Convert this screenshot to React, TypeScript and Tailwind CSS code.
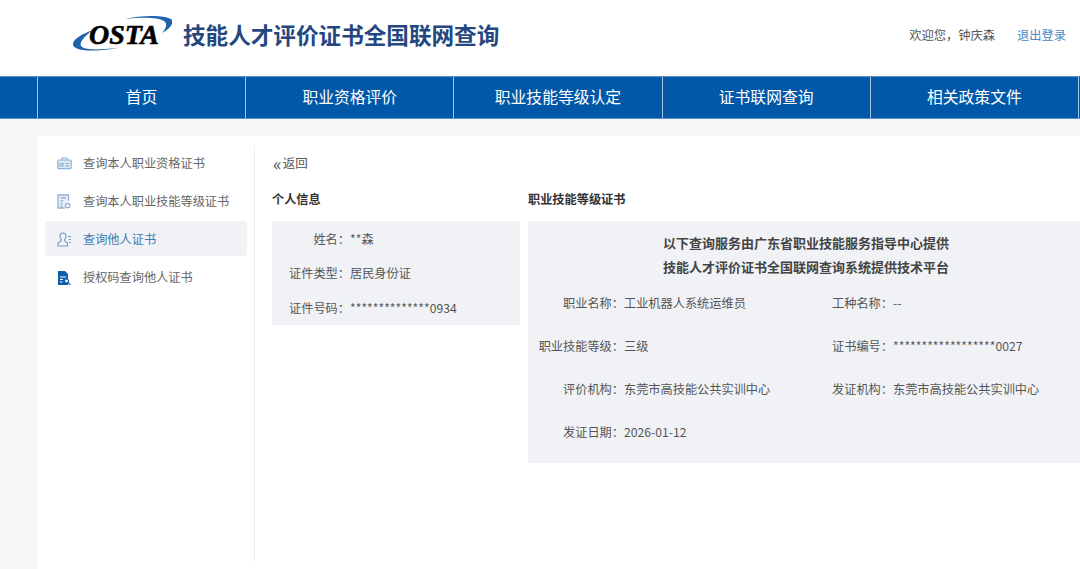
import type { ReactNode } from 'react'

const font = '[font-family:"Noto_Sans_CJK_SC","Liberation_Sans",sans-serif]'

function BriefcaseIcon() {
  return (
    <svg width="15" height="13" viewBox="0 0 15 13" fill="none" stroke="#8fb1d3" strokeWidth="1.2">
      <path d="M5 3V1h5v2" />
      <rect x="0.8" y="3" width="13.4" height="8.6" rx="1" fill="#dfe9f3" />
      <path d="M3 6.5h3v2.500H3zM8.500 6.500h3.500M8.500 8.800h3.500" />
    </svg>
  )
}

function FormIcon() {
  return (
    <svg width="14" height="15" viewBox="0 0 14 15" fill="none" stroke="#8fb1d3" strokeWidth="1.300">
      <path d="M11.500 7V1H1v13h7" fill="#eaf0f7" />
      <path d="M3.500 4h5.500M3.500 6.800h3M3.500 9.500h2M3.500 12h2" />
      <circle cx="10.800" cy="11.500" r="2.200" fill="#fff" />
    </svg>
  )
}

function PersonIcon() {
  return (
    <svg width="15" height="15" viewBox="0 0 15 15" fill="none" stroke="#6f9ccb" strokeWidth="1.100">
      <path d="M6 1c-2 0-3 1.400-3 3.200 0 1.500.6 2.600 1.400 3.300v1.300L1 11v3h9.500v-3L7.600 8.800V7.500c.8-.7 1.400-1.800 1.400-3.300C9 2.400 8 1 6 1z" />
      <path d="M11 4.500h3M12 7.500h2M12 10.500h2" />
    </svg>
  )
}

function DocSearchIcon() {
  return (
    <svg width="14" height="14" viewBox="0 0 14 14">
      <path d="M1 0h7l3 3v11H1z" fill="#0f5ca8" />
      <path d="M3 6h6M3 8.500h3M3 11h2.500" stroke="#fff" strokeWidth="1.100" />
      <circle cx="9.500" cy="10" r="2" fill="#fff" stroke="#0f5ca8" strokeWidth="1.100" />
      <path d="M11 11.500l2.300 2.300" stroke="#0f5ca8" strokeWidth="1.200" />
    </svg>
  )
}

function OstaLogo() {
  return (
    <div className="relative w-[100px] h-[38px] shrink-0">
      <svg className="absolute inset-0" width="100" height="38" viewBox="0 0 100 38" fill="#1f62ad">
        <path d="M21 14C10 18 1 23 1 28c0 6 14 9 45 4-20 2-32 2-36-1-4-3 1-10 11-17z" />
        <path d="M53 3C70-1 95-1 100 4c2 4-3 9-10 13 4-5 6-9 2-12-6-4-22-4-39-2z" />
      </svg>
      <span className="absolute left-[17px] top-[3px] font-['Liberation_Serif',serif] text-[28px] leading-[32px] font-bold italic text-black [-webkit-text-stroke:0.6px_black] whitespace-nowrap">
        OSTA
      </span>
    </div>
  )
}

function Field({ label, value, width }: { label: string; value: ReactNode; width: string }) {
  return (
    <div className="flex text-[12.200px] leading-[18px] text-[#555]">
      <span className={`${width} text-right shrink-0 whitespace-nowrap`}>{label}：</span>
      <span className="whitespace-nowrap">{value}</span>
    </div>
  )
}

const navItems = ['首页', '职业资格评价', '职业技能等级认定', '证书联网查询', '相关政策文件']

const sideItems = [
  { icon: <BriefcaseIcon />, text: '查询本人职业资格证书' },
  { icon: <FormIcon />, text: '查询本人职业技能等级证书' },
  { icon: <PersonIcon />, text: '查询他人证书', active: true },
  { icon: <DocSearchIcon />, text: '授权码查询他人证书' },
]

export default function App() {
  return (
    <div className={`${font} w-[1080px] h-[569px] overflow-hidden bg-[#f6f6f6]`}>
      <header className="h-[76px] bg-white flex items-center pl-[72px] pr-[14px] pb-[6px]">
        <OstaLogo />
        <h1 className="ml-[11px] text-[22.600px] leading-[32px] font-bold text-[#25477f] whitespace-nowrap">
          技能人才评价证书全国联网查询
        </h1>
        <span className="ml-auto text-[12.250px] text-[#555]">欢迎您，钟庆森</span>
        <a className="ml-[22px] text-[12.250px] text-[#4f86bd]">退出登录</a>
      </header>

      <nav className="h-[43px] bg-[#0258a8] border-y border-[#5b92c8] flex pl-[37px]">
        {navItems.map(item => (
          <div
            key={item}
            className="w-[208.200px] pb-[1px] border-l border-[#a9c5e2] flex items-center justify-center text-white text-[15.800px]"
          >
            {item}
          </div>
        ))}
        <div className="border-l border-[#a9c5e2]" />
      </nav>

      <div className="ml-[37px] mt-[17px] h-[433px] bg-white flex pt-[9px]">
        <aside className="w-[218px] h-[416px] border-r border-[#eceef0] pl-[8px] pr-[7px] shrink-0">
          {sideItems.map(item => (
            <div
              key={item.text}
              className={`h-[35px] mb-[3px] pt-[2px] flex items-center rounded-[2px] pl-[11px] text-[12.200px] ${
                item.active ? 'bg-[#f0f2f5] text-[#3f7ab6]' : 'text-[#666]'
              }`}
            >
              <span className="w-[16px] flex justify-center">{item.icon}</span>
              <span className="ml-[11px] whitespace-nowrap">{item.text}</span>
            </div>
          ))}
        </aside>

        <main className="pl-[17px] flex-1 min-w-0">
          <div className="h-[18px] mt-[9px] flex items-center text-[12.500px] text-[#555]">
            <span className="ml-[1px] mr-[1px] text-[18px] leading-[18px]">«</span>返回
          </div>
          <div className="flex mt-[18px] items-start">
            <section className="w-[248px] shrink-0">
              <h2 className="text-[12.200px] leading-[18px] font-bold text-[#333]">个人信息</h2>
              <div className="mt-[13px] h-[104px] bg-[#f0f2f5] pt-[9px] flex flex-col gap-[16.300px]">
                <Field label="姓名" value="**森" width="w-[78px]" />
                <Field label="证件类型" value="居民身份证" width="w-[78px]" />
                <Field label="证件号码" value="**************0934" width="w-[78px]" />
              </div>
            </section>

            <section className="ml-[8px] flex-1 min-w-0">
              <h2 className="text-[12.200px] leading-[18px] font-bold text-[#333]">职业技能等级证书</h2>
              <div className="mt-[13px] h-[242px] bg-[#f0f2f5] pt-[10px]">
                <p className="text-center text-[13px] leading-[24px] font-bold text-[#444] pl-[4px]">
                  以下查询服务由广东省职业技能服务指导中心提供
                  <br />
                  技能人才评价证书全国联网查询系统提供技术平台
                </p>
                <div className="grid grid-cols-[269px_1fr] mt-[14.500px] gap-y-[25.300px]">
                  <Field label="职业名称" value="工业机器人系统运维员" width="w-[96px]" />
                  <Field label="工种名称" value="--" width="w-[96px]" />
                  <Field label="职业技能等级" value="三级" width="w-[96px]" />
                  <Field label="证书编号" value="******************0027" width="w-[96px]" />
                  <Field label="评价机构" value="东莞市高技能公共实训中心" width="w-[96px]" />
                  <Field label="发证机构" value="东莞市高技能公共实训中心" width="w-[96px]" />
                  <Field label="发证日期" value="2026-01-12" width="w-[96px]" />
                </div>
              </div>
            </section>
          </div>
        </main>
      </div>
    </div>
  )
}
